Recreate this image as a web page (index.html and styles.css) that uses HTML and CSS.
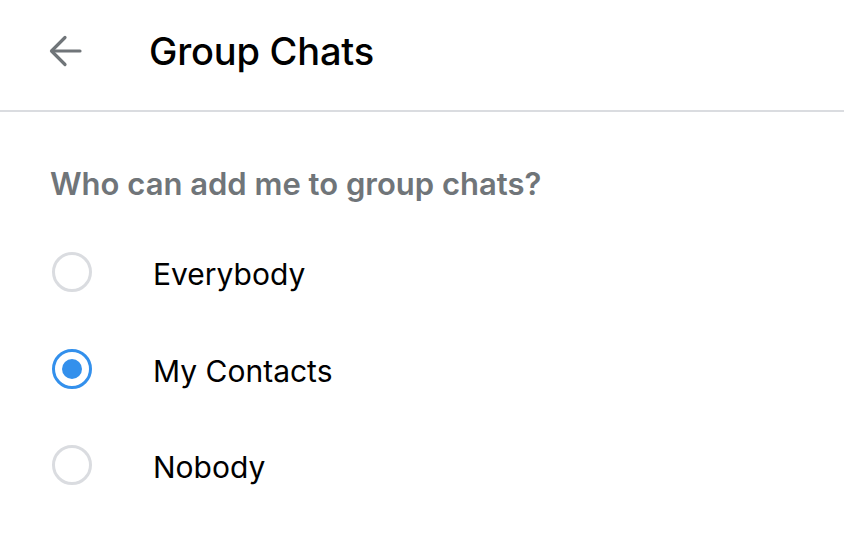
FILE: index.html
```html
<!DOCTYPE html>
<html lang="en">
<head>
<meta charset="utf-8">
<title>Group Chats</title>
<link rel="stylesheet" href="styles.css">
</head>
<body>
<header class="topbar">
  <button class="back" aria-label="Back">
    <svg width="34" height="32" viewBox="0 0 34 32" fill="none" stroke="#707579" stroke-width="3.2" stroke-linecap="round" stroke-linejoin="round">
      <path d="M31 16H3.5"/>
      <path d="M16 2.5L2.5 16L16 29.5"/>
    </svg>
  </button>
  <h1 class="title">Group Chats</h1>
</header>
<main class="content">
  <h2 class="section-title">Who can add me to group chats?</h2>
  <ul class="options">
    <li class="option"><span class="radio"></span><span class="label">Everybody</span></li>
    <li class="option"><span class="radio checked"></span><span class="label">My Contacts</span></li>
    <li class="option"><span class="radio"></span><span class="label">Nobody</span></li>
  </ul>
</main>
</body>
</html>
```
FILE: styles.css
```css
* { box-sizing: border-box; }
html, body { margin: 0; padding: 0; background: #fff; }
body {
  font-family: Inter, "Noto Sans", "Liberation Sans", sans-serif;
  color: #000;
  width: 844px;
  height: 540px;
  overflow: hidden;
}
.topbar {
  height: 112px;
  border-bottom: 2px solid #dadce0;
  display: flex;
  align-items: center;
  padding: 0 0 8px 49px;
  gap: 66px;
}
.back {
  border: 0;
  background: none;
  padding: 0;
  width: 34px;
  height: 32px;
  display: flex;
}
.title {
  margin: 0;
  font-size: 38px;
  font-weight: 500;
  line-height: 46px;
  letter-spacing: -0.2px;
}
.content {
  padding: 54px 0 0 50px;
}
.section-title {
  margin: 0;
  font-size: 31px;
  font-weight: 600;
  line-height: 36px;
  color: #707579;
}
.options {
  list-style: none;
  margin: 22px 0 0;
  padding: 0;
}
.option {
  height: 96.5px;
  display: flex;
  align-items: center;
  padding-left: 2px;
  gap: 61px;
}
.radio {
  width: 40px;
  height: 40px;
  border-radius: 50%;
  border: 3px solid #dadce0;
  display: flex;
  align-items: center;
  justify-content: center;
  flex: none;
}
.radio.checked {
  border: 3.5px solid #3390ec;
}
.radio.checked::after {
  content: "";
  width: 20px;
  height: 20px;
  border-radius: 50%;
  background: #3390ec;
}
.label {
  font-size: 30px;
  line-height: 36px;
  padding-top: 4px;
}
```
